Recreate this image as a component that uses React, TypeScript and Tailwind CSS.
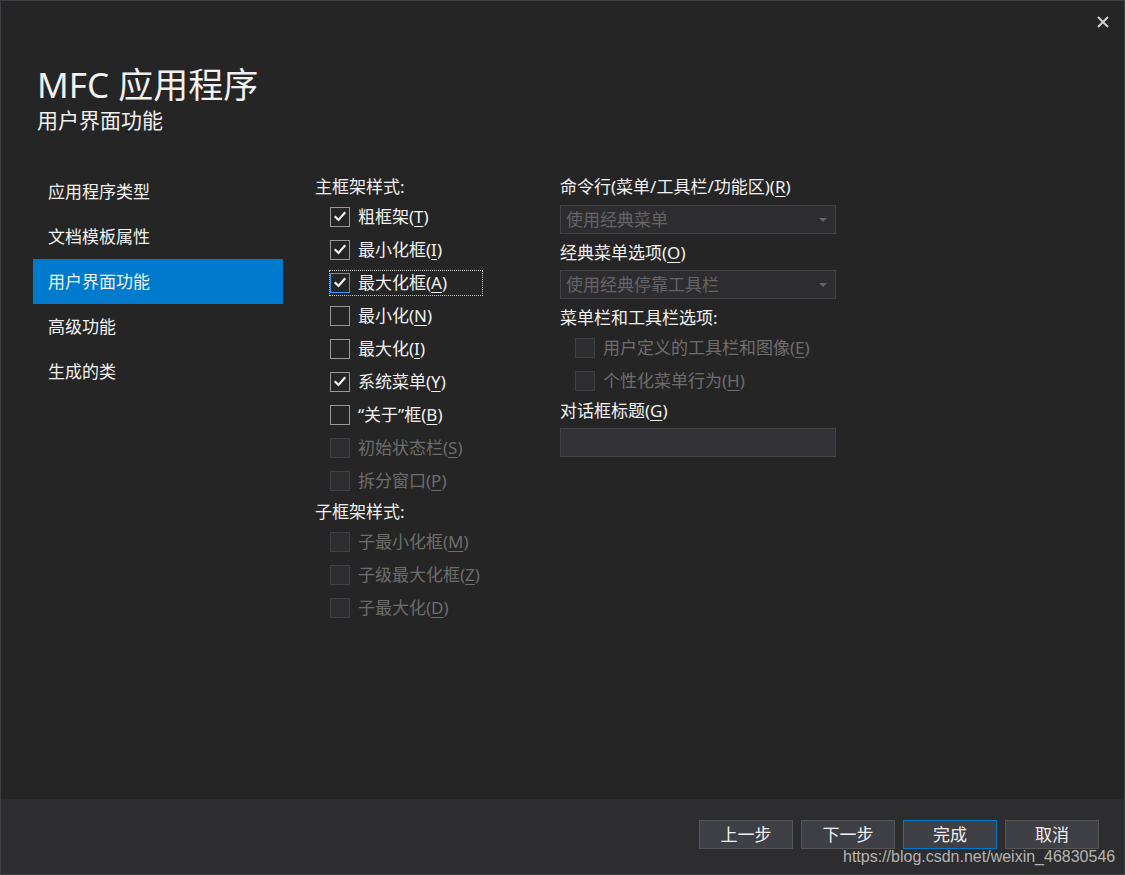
import React from "react"

function Check() {
  return (
    <svg width="14" height="14" viewBox="0 0 14 14" className="block">
      <path d="M2.5 7 L5.5 10 L11.5 3" fill="none" stroke="#f1f1f1" strokeWidth="2.2" strokeLinecap="square" />
    </svg>
  )
}

function Label({ text, m }: { text: string; m: string }) {
  return (
    <>
      {text}(<u className="underline-offset-[3px] decoration-1">{m}</u>)
    </>
  )
}

type Box = { text: string; m: string; checked?: boolean; disabled?: boolean; focus?: boolean }

function CheckRow({ item }: { item: Box }) {
  const boxCls = item.disabled
    ? "w-[20px] h-[20px] bg-[#2d2d30] border border-[#3f3f46] flex items-center justify-center shrink-0"
    : item.focus
    ? "w-[20px] h-[20px] border border-[#3399ff] flex items-center justify-center shrink-0"
    : "w-[20px] h-[20px] border border-[#999999] flex items-center justify-center shrink-0"
  return (
    <div className="h-[33px] flex items-center pl-[15px]">
      <div
        className={
          item.focus
            ? "flex items-center h-[24px] pr-[35px] outline outline-1 outline-dotted outline-[#c8c8c8]"
            : "flex items-center"
        }
      >
        <div className={boxCls}>{item.checked && <Check />}</div>
        <span className={item.disabled ? "ml-[8px] text-[#6d6d6d]" : "ml-[8px] text-[#f1f1f1]"}>
          <Label text={item.text} m={item.m} />
        </span>
      </div>
    </div>
  )
}

function Dropdown({ value }: { value: string }) {
  return (
    <div className="w-[276px] h-[29px] bg-[#2d2d30] border border-[#434346] flex items-center justify-between pl-[5px] pr-[8px]">
      <span className="text-[#656565]">{value}</span>
      <svg width="8" height="4" viewBox="0 0 8 4">
        <path d="M0 0 L8 0 L4 4 Z" fill="#656565" />
      </svg>
    </div>
  )
}

export default function App() {
  const nav = ["应用程序类型", "文档模板属性", "用户界面功能", "高级功能", "生成的类"]
  const main: Box[] = [
    { text: "粗框架", m: "T", checked: true },
    { text: "最小化框", m: "I", checked: true },
    { text: "最大化框", m: "A", checked: true, focus: true },
    { text: "最小化", m: "N" },
    { text: "最大化", m: "I" },
    { text: "系统菜单", m: "Y", checked: true },
    { text: "“关于”框", m: "B" },
    { text: "初始状态栏", m: "S", disabled: true },
    { text: "拆分窗口", m: "P", disabled: true },
  ]
  const child: Box[] = [
    { text: "子最小化框", m: "M", disabled: true },
    { text: "子级最大化框", m: "Z", disabled: true },
    { text: "子最大化", m: "D", disabled: true },
  ]
  const toolbar: Box[] = [
    { text: "用户定义的工具栏和图像", m: "E", disabled: true },
    { text: "个性化菜单行为", m: "H", disabled: true },
  ]

  return (
    <div className="w-[1125px] h-[875px] bg-[#252526] border border-[#3f3f46] flex flex-col relative text-[#f1f1f1] text-[17px] font-['Noto_Sans','Noto_Sans_CJK_SC',sans-serif] leading-none">
      <div className="absolute right-[15px] top-[15px]">
        <svg width="12" height="12" viewBox="0 0 12 12">
          <path d="M1 1 L11 11 M11 1 L1 11" stroke="#d0d0d0" strokeWidth="2" />
        </svg>
      </div>

      <div className="h-[168px] pl-[36px] pt-[62px] shrink-0">
        <div className="text-[35px] leading-[44px]">MFC 应用程序</div>
        <div className="text-[21px] leading-[26px]">用户界面功能</div>
      </div>

      <div className="flex-1 flex">
        <div className="ml-[32px] w-[250px]">
          {nav.map((n, i) => (
            <div
              key={n}
              className={
                i === 2
                  ? "h-[45px] flex items-center pl-[15px] bg-[#007acc]"
                  : "h-[45px] flex items-center pl-[15px]"
              }
            >
              {n}
            </div>
          ))}
        </div>

        <div className="ml-[32px] w-[245px] mt-[3px]">
          <div className="h-[28px] flex items-center">主框架样式:</div>
          {main.map((b, i) => (
            <CheckRow key={i} item={b} />
          ))}
          <div className="h-[28px] flex items-center">子框架样式:</div>
          {child.map((b, i) => (
            <CheckRow key={i} item={b} />
          ))}
        </div>

        <div className="w-[276px] mt-[3px] flex flex-col">
          <div className="h-[28px] flex items-center">
            <Label text="命令行(菜单/工具栏/功能区)" m="R" />
          </div>
          <div className="mt-[5px]">
            <Dropdown value="使用经典菜单" />
          </div>
          <div className="h-[28px] mt-[4px] flex items-center">
            <Label text="经典菜单选项" m="O" />
          </div>
          <div className="mt-[4px]">
            <Dropdown value="使用经典停靠工具栏" />
          </div>
          <div className="h-[28px] mt-[4px] flex items-center">菜单栏和工具栏选项:</div>
          {toolbar.map((b, i) => (
            <CheckRow key={i} item={b} />
          ))}
          <div className="h-[26px] flex items-center">
            <Label text="对话框标题" m="G" />
          </div>
          <div className="mt-[5px] w-[276px] h-[29px] bg-[#333337] border border-[#434346]"></div>
        </div>
      </div>

      <div className="h-[75px] bg-[#2d2d30] shrink-0 flex justify-end items-start pt-[21px] pr-[25px] gap-[8px]">
        {["上一步", "下一步", "完成", "取消"].map((b) => (
          <div
            key={b}
            className={
              b === "完成"
                ? "w-[94px] h-[29px] bg-[#3f3f46] border border-[#007acc] flex items-center justify-center"
                : "w-[94px] h-[29px] bg-[#3f3f46] border border-[#555555] flex items-center justify-center"
            }
          >
            {b}
          </div>
        ))}
      </div>

      <span className="absolute left-[842px] top-[846px] text-[16px] leading-[20px] text-[#b4b4b4] font-['Liberation_Sans',sans-serif]">
        https://blog.csdn.net/weixin_46830546
      </span>
    </div>
  )
}
